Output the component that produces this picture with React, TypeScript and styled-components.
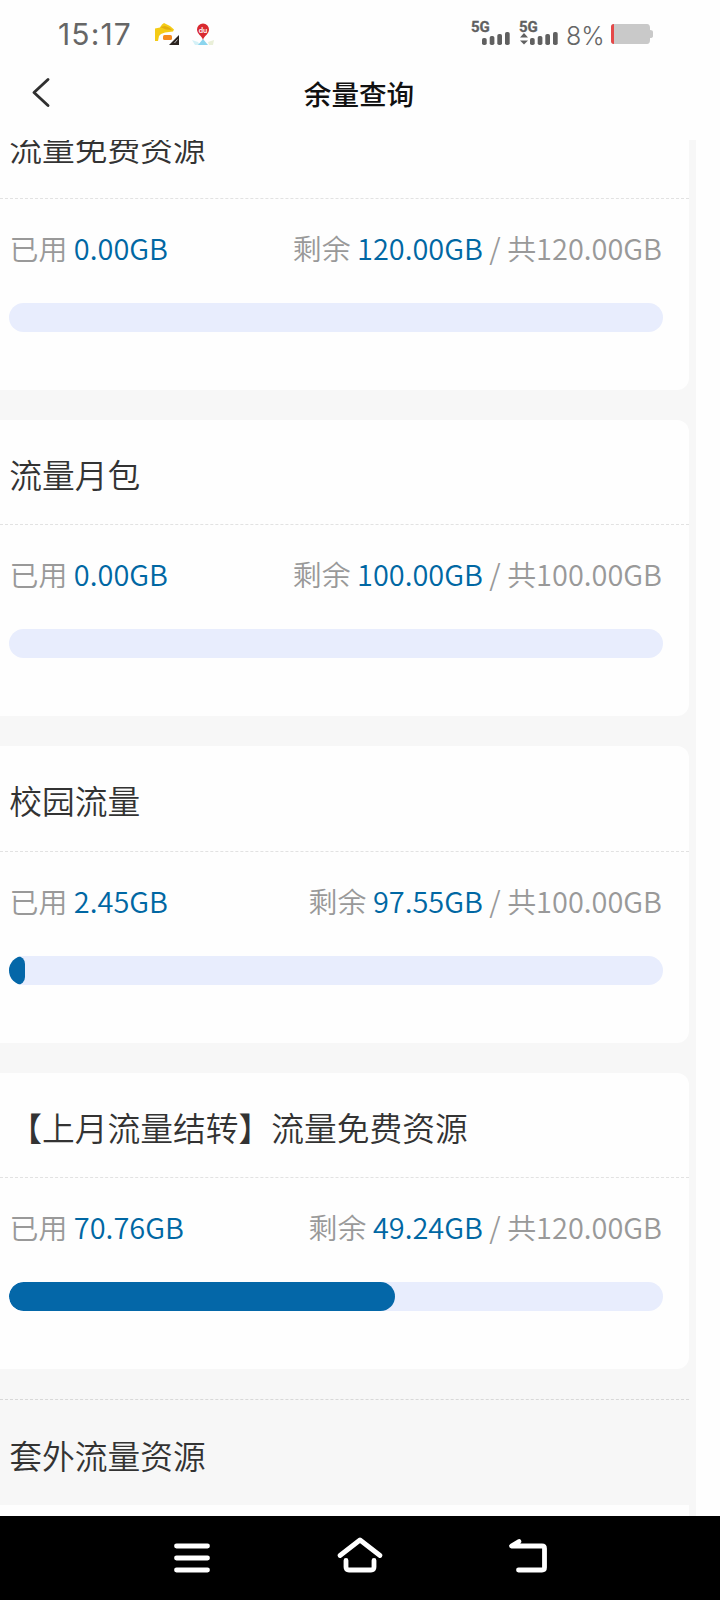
import React from "react";
import styled, { createGlobalStyle } from "styled-components";

const Global = createGlobalStyle`
  * { box-sizing: border-box; }
  body {
    margin: 0;
    background: #fefefe;
    font-family: "Noto Sans CJK SC", "Noto Sans", sans-serif;
  }
`;

const Screen = styled.div`
  width: 720px;
  height: 1600px;
  overflow: hidden;
  display: flex;
  flex-direction: column;
  background: #fefefe;
`;

const StatusBar = styled.div`
  flex: none;
  height: 64px;
  display: flex;
  align-items: flex-start;
  justify-content: space-between;
  padding: 0 67px 0 58px;
  color: #666;
`;

const StatusGroup = styled.div`
  display: flex;
  align-items: flex-start;
`;

const Clock = styled.span`
  width: 94px;
  font: 400 30px/34px Inter, Roboto, sans-serif;
  letter-spacing: 1.1px;
  padding-top: 17px;
`;

const StatusIcons = styled.svg`
  display: block;
`;

const Percent = styled.span`
  font: 300 25px/30px Inter, Roboto, sans-serif;
  width: 44px;
  padding-top: 21px;
`;

const TitleBar = styled.header`
  flex: none;
  height: 76px;
  display: grid;
  grid-template-columns: 80px 1fr 82px;
  padding-top: 9px;
`;

const BackButton = styled.button`
  border: 0;
  padding: 0 0 0 30px;
  height: 40px;
  background: none;
  text-align: left;
`;

const PageTitle = styled.h1`
  margin: 0;
  font-size: 27.6px;
  line-height: 40px;
  font-weight: 500;
  text-align: center;
  color: #111;
`;

const Viewport = styled.main`
  flex: none;
  width: 696px;
  height: 1376px;
  overflow: hidden;
  display: flex;
  flex-direction: column;
  gap: 30px;
  padding-right: 7px;
  background: #f7f7f7;
`;

const Card = styled.section<{ $clipped?: boolean }>`
  flex: none;
  height: 296.5px;
  margin-top: ${(p) => (p.$clipped ? "-47px" : "0")};
  background: #fefefe;
  border-radius: 0 12px 12px 0;
`;

const CardTitle = styled.h2`
  margin: 0;
  height: 105.9px;
  padding: 0 9.3px;
  border-bottom: 1px dashed #e2e2e2;
  font-size: 32.75px;
  line-height: 107px;
  font-weight: 350;
  color: #333;
  white-space: nowrap;
`;

const Stats = styled.div`
  height: 103.9px;
  padding: 0 27px 0 9.5px;
  display: flex;
  justify-content: space-between;
  font-size: 28.95px;
  font-weight: 350;
  line-height: 97px;
  color: #999;
  white-space: pre;
`;

const Amount = styled.span`
  color: #0067a3;
`;

const Track = styled.div`
  height: 29px;
  margin: 0 26px 0 9px;
  border-radius: 15px;
  background: #e8edfd;
  overflow: hidden;
`;

const Fill = styled.div`
  height: 100%;
  border-radius: 15px;
  background: #0467a8;
`;

const ExtraSection = styled.section`
  flex: none;
  border-top: 1px dashed #d8d8d8;
`;

const ExtraTitle = styled.h2`
  margin: 0;
  height: 105px;
  padding: 0 9.3px;
  font-size: 32.75px;
  line-height: 109px;
  font-weight: 350;
  color: #333;
`;

const ExtraBody = styled.div`
  height: 40px;
  background: #fefefe;
`;

const NavBar = styled.nav`
  flex: none;
  height: 84px;
  display: flex;
  align-items: flex-start;
  padding: 20px 0 0 168px;
  gap: 120px;
  background: #000;
`;

const NavIcon = styled.svg`
  display: block;
  width: 48px;
  height: 44px;
  fill: none;
  stroke: #fff;
  stroke-width: 4.8;
  stroke-linecap: round;
  stroke-linejoin: round;
`;

type Plan = { name: string; used: string; left: string; total: string; percent: number };

const plans: Plan[] = [
  { name: "流量免费资源", used: "0.00GB", left: "120.00GB", total: "120.00GB", percent: 0 },
  { name: "流量月包", used: "0.00GB", left: "100.00GB", total: "100.00GB", percent: 0 },
  { name: "校园流量", used: "2.45GB", left: "97.55GB", total: "100.00GB", percent: 2.45 },
  { name: "【上月流量结转】流量免费资源", used: "70.76GB", left: "49.24GB", total: "120.00GB", percent: 58.97 },
];

function PlanCard({ plan, clipped }: { plan: Plan; clipped: boolean }) {
  return (
    <Card $clipped={clipped}>
      <CardTitle>{plan.name}</CardTitle>
      <Stats>
        <span>已用 <Amount>{plan.used}</Amount></span>
        <span>剩余 <Amount>{plan.left}</Amount> / 共{plan.total}</span>
      </Stats>
      <Track>
        <Fill style={{ width: `${plan.percent}%` }} />
      </Track>
    </Card>
  );
}

function AppIcons() {
  return (
    <StatusIcons width="64" height="48" viewBox="152 0 64 48">
      <path d="M155 28.500l5-1 2-3 2-1.500 6 3 4 3.500-1 2-8 1-4 1.500-2 2-1 5h-3z" fill="#f4cb16" />
      <path d="M160 27l5-1 4 1.500 3 2.500-6-.5z" fill="#e3ae0c" />
      <rect x="163" y="35" width="9" height="5" rx="1.5" fill="#f58a1f" />
      <path d="M179 35v10h-10z" fill="#2b2320" />
      <path d="M174.500 43l3-3.500" stroke="#bbb" strokeWidth="1" />
      <path d="M192 40l6 2 2 3h-5z" fill="#d5f1f7" />
      <path d="M214 40l-6 2 1 3h4z" fill="#e9efd8" />
      <path d="M203 39l5 6h-10z" fill="#8bd5ee" />
      <path d="M203 40c-1-4-6-6-6-10.500a6 6 0 0 1 12 0c0 4.500-5 6.500-6 10.500z" fill="#d9292f" />
      <text x="203" y="33" textAnchor="middle" fontFamily="Inter" fontSize="7" fontWeight="600" fill="#fff">du</text>
    </StatusIcons>
  );
}

function Signal({ data }: { data?: boolean }) {
  return (
    <StatusIcons width="48" height="48" viewBox="0 0 48 48">
      <text x="1" y="32" fontFamily="Roboto" fontSize="15" fontWeight="700" fill="#606060" stroke="#606060" strokeWidth="0.300">5G</text>
      <g fill="#606060">
        {data && <path d="M2 37.500l4-4.500 4 4.500zM2 40.500h8l-4 4z" />}
        <rect x="12" y="38" width="4.700" height="7" rx="1.800" />
        <rect x="19.700" y="36" width="4.700" height="9" rx="1.800" />
        <rect x="27.300" y="34" width="4.700" height="11" rx="1.800" />
        <rect x="35" y="32" width="4.700" height="13" rx="1.800" />
      </g>
    </StatusIcons>
  );
}

export default function App() {
  return (
    <>
      <Global />
      <Screen>
        <StatusBar>
          <StatusGroup>
            <Clock>15:17</Clock>
            <AppIcons />
          </StatusGroup>
          <StatusGroup>
            <Signal />
            <Signal data />
            <Percent>8%</Percent>
            <StatusIcons width="43" height="48" viewBox="610 0 43 48">
              <path d="M614 24h33q3 0 3 4v2q3 0 3 2v4q0 2-3 2v2q0 4-3 4h-33q-3 0-3-3V27q0-3 3-3z" fill="#c9c9c9" />
              <path d="M614 24q-3 0-3 3v14q0 3 3 3z" fill="#e54848" />
            </StatusIcons>
          </StatusGroup>
        </StatusBar>
        <TitleBar>
          <BackButton aria-label="返回">
            <svg width="22" height="36" viewBox="30 74 22 36" fill="none" stroke="#303030" strokeWidth="2.900" strokeLinecap="round" strokeLinejoin="round">
              <path d="M48 79.500L34 92.500L48 105.500" />
            </svg>
          </BackButton>
          <PageTitle>余量查询</PageTitle>
        </TitleBar>
        <Viewport>
          {plans.map((plan, i) => (
            <PlanCard key={plan.name} plan={plan} clipped={i === 0} />
          ))}
          <ExtraSection>
            <ExtraTitle>套外流量资源</ExtraTitle>
            <ExtraBody />
          </ExtraSection>
        </Viewport>
        <NavBar>
          <NavIcon viewBox="168 1536 48 44">
            <path d="M176.500 1546h31M176.500 1558h31M176.500 1570h31" />
          </NavIcon>
          <NavIcon viewBox="336 1536 48 44">
            <path d="M340 1555.500L360 1540L380 1555.500M346 1560.500V1567q0 3 3 3h22q3 0 3-3V1560.500" />
          </NavIcon>
          <NavIcon viewBox="504 1536 48 44">
            <path d="M519 1541.500L511.500 1546H542q2.500 0 2.500 2.500V1567.500q0 2.500-2.500 2.500H518.500" />
          </NavIcon>
        </NavBar>
      </Screen>
    </>
  );
}
